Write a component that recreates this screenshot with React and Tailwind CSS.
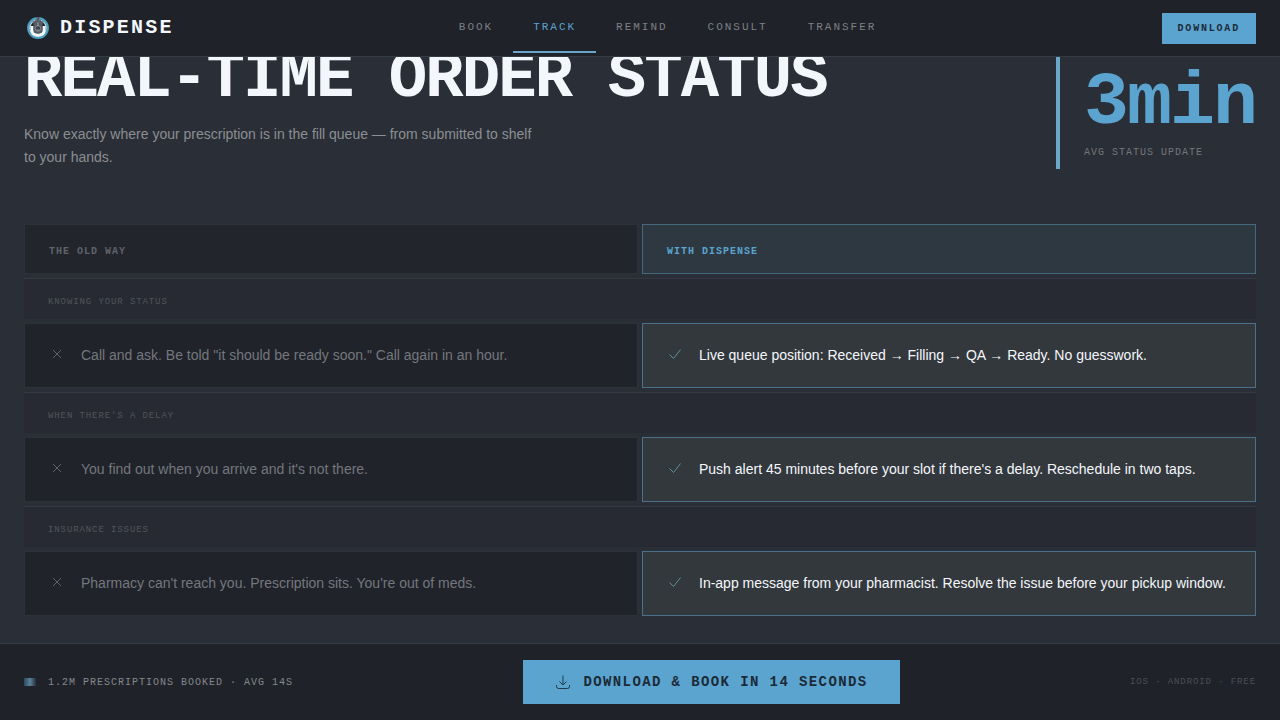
const navLinks = ['Book', 'Track', 'Remind', 'Consult', 'Transfer'];

const comparisons = [
  {
    topic: 'Knowing your status',
    before: 'Call and ask. Be told "it should be ready soon." Call again in an hour.',
    after: 'Live queue position: Received → Filling → QA → Ready. No guesswork.',
  },
  {
    topic: "When there's a delay",
    before: "You find out when you arrive and it's not there.",
    after: "Push alert 45 minutes before your slot if there's a delay. Reschedule in two taps.",
  },
  {
    topic: 'Insurance issues',
    before: "Pharmacy can't reach you. Prescription sits. You're out of meds.",
    after: 'In-app message from your pharmacist. Resolve the issue before your pickup window.',
  },
];

function Logo() {
  return (
    <svg className="size-7" viewBox="0 0 28 28" fill="none" aria-hidden="true">
      <circle cx="14" cy="14" r="9.900" stroke="#4aa3c4" strokeWidth="2" />
      <circle cx="14" cy="14" r="8.300" stroke="#a9d0df" strokeWidth="1.400" />
      <path d="M8 12v3.500c0 4 2.300 5.700 6 5.700s6-1.700 6-5.700V12" stroke="#f1f6f9" strokeWidth="3.200" />
      <path d="M9.500 10.500L8.500 7l2.500 1V5.500l1.500 1.500V3h3v4L17 5.500V8l2.500-1-1 3.500V17c0 1.700-1.700 2.500-4.500 2.500S9.500 18.700 9.500 17z" fill="#565a62" />
      <circle cx="14" cy="14.500" r="2.800" stroke="#858a92" strokeWidth="1" fill="#3d4149" />
      <path d="M12.500 16h3M14 8v4" stroke="#9a9fa6" strokeWidth="1" />
    </svg>
  );
}

function CrossIcon() {
  return (
    <svg className="size-4 shrink-0 mt-0.5" viewBox="0 0 16 16" fill="none" stroke="#5f646c" aria-hidden="true">
      <path d="M4 4l8 8M12 4l-8 8" />
    </svg>
  );
}

function CheckIcon() {
  return (
    <svg className="size-4 shrink-0 mt-0.5" viewBox="0 0 16 16" fill="none" stroke="#5b8f99" aria-hidden="true">
      <path d="M2.500 8.500l4 4L13.500 3.500" />
    </svg>
  );
}

function DownloadIcon() {
  return (
    <svg className="size-4 shrink-0" viewBox="0 0 16 16" fill="none" stroke="#1f3a4d" aria-hidden="true">
      <path d="M8 1.500v9M4.500 7.500L8 11l3.500-3.500" />
      <path d="M1.500 11v1.500a2 2 0 0 0 2 2h9a2 2 0 0 0 2-2V11" />
    </svg>
  );
}

function Header() {
  return (
    <header className="fixed inset-x-0 top-0 z-10 border-b border-[#333b43] bg-[#1f2229]">
      <div className="flex h-14 items-center justify-between px-6">
        <a href="#" className="flex items-center gap-2">
          <Logo />
          <span className="text-xl font-bold leading-6 tracking-[0.11em] text-[#f3f7fc] uppercase">Dispense</span>
        </a>
        <nav className="flex">
          {navLinks.map((label) => (
            <a
              key={label}
              href="#"
              className={`border-b-2 px-5 py-4 text-[11px] leading-4 tracking-[0.18em] uppercase ${
                label === 'Track' ? 'border-[#6ba6c9] text-[#5ba4cf]' : 'border-transparent text-[#7d8085]'
              }`}
            >
              {label}
            </a>
          ))}
        </nav>
        <button
          type="button"
          className="bg-[#5ba4cf] px-4 py-2 text-[10px] font-bold leading-[15px] tracking-[0.18em] text-[#1c2a38] uppercase"
        >
          Download
        </button>
      </div>
    </header>
  );
}

function Hero() {
  return (
    <section className="flex items-end justify-between">
      <div>
        <h1 className="text-[64px] font-bold leading-none tracking-[-0.03em] text-[#f3f7fc] uppercase">
          Real-time order status
        </h1>
        <p className="mt-3 max-w-[520px] font-['Liberation_Sans',sans-serif] text-sm leading-[23px] text-[#8b8e92]">
          Know exactly where your prescription is in the fill queue — from submitted to shelf to your hands.
        </p>
      </div>
      <div className="border-l-4 border-[#6ba6cb] pt-3 pb-2 pl-6">
        <div className="text-[75px] font-bold leading-none tracking-[-2px] text-[#5ba4cf]">3min</div>
        <div className="mt-1 text-[10px] leading-4 tracking-widest text-[#74777c] uppercase">Avg status update</div>
      </div>
    </section>
  );
}

function ComparisonRows({ topic, before, after }) {
  return (
    <tbody>
      <tr>
        <th
          colSpan={2}
          scope="colgroup"
          className="border-t border-[#343941] bg-[#272a32] px-6 pt-[15px] pb-[9px] text-left text-[9px] font-normal leading-4 tracking-widest text-[#51555c] uppercase"
        >
          {topic}
        </th>
      </tr>
      <tr className="font-['Liberation_Sans',sans-serif] text-sm leading-[23px]">
        <td className="border border-[#2d3138] bg-[#20232a] px-6 py-5 text-[#74777d]">
          <div className="flex items-start gap-4">
            <CrossIcon />
            {before}
          </div>
        </td>
        <td className="border border-[#4b7089] bg-[#33383d] px-6 py-5 text-[#f3f7fc]">
          <div className="flex items-start gap-4">
            <CheckIcon />
            {after}
          </div>
        </td>
      </tr>
    </tbody>
  );
}

function Comparison() {
  return (
    <section className="-mx-1 mt-[51px]">
      <table className="w-full table-fixed border-separate border-spacing-1">
        <thead>
          <tr className="text-left text-[10px] leading-4 tracking-widest uppercase">
            <th scope="col" className="border border-[#2d3138] bg-[#22252c] px-6 pt-[19px] pb-[13px] text-[#5f636a]">
              The old way
            </th>
            <th scope="col" className="border border-[#456a80] bg-[#2d3840] px-6 pt-[19px] pb-[13px] text-[#5ba4cf]">
              With Dispense
            </th>
          </tr>
        </thead>
        {comparisons.map((item) => (
          <ComparisonRows key={item.topic} {...item} />
        ))}
      </table>
    </section>
  );
}

function DownloadBar() {
  return (
    <footer className="fixed inset-x-0 bottom-0 z-10 flex items-center justify-between border-t border-[#353b43] bg-[#1f2229] px-6 py-4">
      <div className="flex items-center gap-3 text-[10px] leading-[17px] tracking-widest text-[#85888c] uppercase">
        <span className="h-2 w-3 bg-linear-to-r from-[#2c4a5c] via-[#5b8298] to-[#26303b]" />
        1.2M prescriptions booked · Avg 14s
      </div>
      <button
        type="button"
        className="flex h-11 items-center gap-3 bg-[#5ba4cf] px-8 text-sm font-bold tracking-widest text-[#1c2a38] uppercase"
      >
        <DownloadIcon />
        Download &amp; book in 14 seconds
      </button>
      <div className="text-[9px] leading-4 tracking-widest text-[#4c4f55] uppercase">iOS · Android · Free</div>
    </footer>
  );
}

export default function App() {
  return (
    <div className="min-h-screen bg-[#2a2e36] font-['Liberation_Mono',monospace]">
      <Header />
      <main className="px-6 pt-[47px] pb-24">
        <Hero />
        <Comparison />
      </main>
      <DownloadBar />
    </div>
  );
}
